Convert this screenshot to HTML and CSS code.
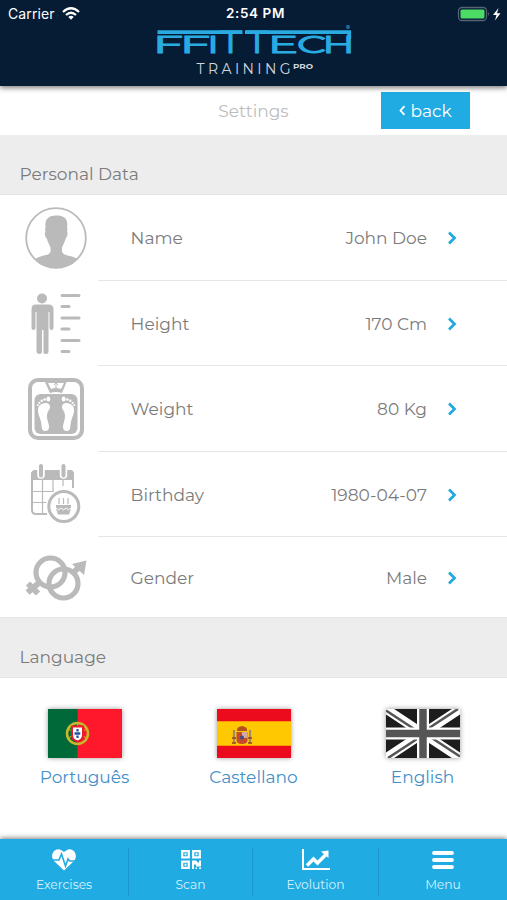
FILE: index.html
```html
<!DOCTYPE html>
<html lang="en">
<head>
<meta charset="utf-8">
<title>Settings</title>
<link rel="stylesheet" href="styles.css">
</head>
<body>
<div class="app">
  <header class="header">
    <div class="status">
      <div class="carrier"><span>Carrier</span>
        <svg width="18" height="13" viewBox="0 0 18 13" fill="none" stroke="#fff" stroke-width="2.300"><path d="M1 5Q9-2.400 17 5M4 8Q9 3.500 14 8"/><path d="M6.300 9.900Q9 7.800 11.700 9.900L9 12.700Z" fill="#fff" stroke="none"/></svg>
      </div>
      <span class="time">2:54 PM</span>
      <div class="battery">
        <svg width="46" height="16" viewBox="0 0 46 16"><rect x="1.500" y="1.500" width="28" height="13" rx="3.500" fill="none" stroke="#566373" stroke-width="1.300"/><rect x="3.500" y="3.500" width="24" height="9" rx="1.500" fill="#4cdb63"/><path d="M31 6q2 2 0 4z" fill="#566373"/><path d="M41.500 2L36 9h3.500L38 14.500 43.500 7.200H40z" fill="#fff"/></svg>
      </div>
    </div>
    <svg class="logo" width="200" height="52" viewBox="0 0 200 52">
      <path d="M3.500 5.200H88.500M91 5.200H197M195.200 4v8" stroke="#29abe2" stroke-width="3.800"/>
      <text class="brand" y="26"><tspan x="-1" textLength="30" lengthAdjust="spacingAndGlyphs">F</tspan><tspan x="26" textLength="30" lengthAdjust="spacingAndGlyphs">F</tspan><tspan x="53" textLength="12" lengthAdjust="spacingAndGlyphs">I</tspan><tspan class="tall" x="66" textLength="21" lengthAdjust="spacingAndGlyphs">T</tspan><tspan class="tall" x="92.500" textLength="21" lengthAdjust="spacingAndGlyphs">T</tspan><tspan x="114" textLength="30" lengthAdjust="spacingAndGlyphs">E</tspan><tspan x="143" textLength="29" lengthAdjust="spacingAndGlyphs">C</tspan><tspan x="168.500" textLength="32" lengthAdjust="spacingAndGlyphs">H</tspan></text>
      <text class="reg" x="192" y="3">®</text>
      <text class="sub" x="42.500" y="47" textLength="94">TRAINING</text>
      <text class="pro" x="139" y="41.500" textLength="20" lengthAdjust="spacingAndGlyphs">PRO</text>
    </svg>
  </header>
  <div class="titlebar">
    <h1>Settings</h1>
    <button class="back"><svg width="7" height="11" viewBox="0 0 7 11"><path d="M5.500 1.200L1.500 5.500l4 4.300" fill="none" stroke="#fff" stroke-width="1.800"/></svg><span>back</span></button>
  </div>
  <h2 class="section">Personal Data</h2>
  <main class="rows">
    <div class="row">
      <svg class="icon" viewBox="0 0 64 64"><circle cx="32" cy="32" r="29.800" fill="#fff" stroke="#bababa" stroke-width="1.800"/><path d="M21.500 21C20 10 29 9.500 33 9.500S45 11 43 21c.5 2 .5 3 0 5 1.500 1 0 5-1.500 7-1 4-3 6-3.500 9-1 6 3 7 8 8 4 1 6 2 7.500 3Q45 62 32 62T11.500 53c2-2 5-2.500 8-3.500 5-1 8-2 7-7.500-.5-3-2.500-5-3.500-9-2-2-3-6-1.500-7-.5-2-.5-3 0-5z" fill="#bababa"/></svg>
      <div class="cell"><span>Name</span><span class="value">John Doe</span><svg class="chev" viewBox="0 0 10 14"><path d="M2 1.500L7.500 7 2 12.500"/></svg></div>
    </div>
    <div class="row">
      <svg class="icon" viewBox="0 0 64 64" fill="#bababa"><g transform="translate(-.5 -1)"><circle cx="18.500" cy="7.500" r="5"/><path d="M12 13.500h13q5 0 5 5V37q0 2-2 2t-2-2V21h-1v40q0 2-2.600 2T20 61V39h-1.500v22q0 2-2.500 2t-3-2V21h-1v16q0 2-2 2t-2-2V18.500q0-5 4-5z"/><path d="M38.500 4.500h17M38.500 15.500h7M38.500 27h17M38.500 38h7M38.500 49.500h17M38.500 60.500h7" stroke="#bababa" stroke-width="3" stroke-linecap="round"/></g></svg>
      <div class="cell"><span>Height</span><span class="value">170 Cm</span><svg class="chev" viewBox="0 0 10 14"><path d="M2 1.500L7.500 7 2 12.500"/></svg></div>
    </div>
    <div class="row">
      <svg class="icon" viewBox="0 0 64 64"><rect x="6" y="3" width="52" height="58" rx="8" fill="#fff" stroke="#bababa" stroke-width="4"/><path d="M20.500 4H43l-5 12q-6-2-12 0z" fill="#bababa"/><path d="M24 6h16l-3 6q-5-2-10 0z" fill="#fff"/><path d="M32 11V7.500M30 8l2-2 2 2" fill="none" stroke="#bababa"/><rect x="10.500" y="17" width="43" height="40" rx="6" fill="#bababa"/><g id="foot" fill="#fff"><path d="M14 33c0-5 4-7 8-7 4 0 5 4 3 7-3 4-2 8-1 12 2 6 1 9-3 9-4 0-3-5-4-9-1-5-3-7-3-12z"/><ellipse cx="24.300" cy="22" rx="2" ry="2.500"/><circle cx="20.600" cy="22.500" r="1.300"/><circle cx="17.700" cy="23.800" r="1.200"/><circle cx="15.400" cy="25.800" r="1.100"/><circle cx="13.800" cy="28" r="1"/></g><use href="#foot" transform="matrix(-1 0 0 1 64 0)"/></svg>
      <div class="cell"><span>Weight</span><span class="value">80 Kg</span><svg class="chev" viewBox="0 0 10 14"><path d="M2 1.500L7.500 7 2 12.500"/></svg></div>
    </div>
    <div class="row">
      <svg class="icon" viewBox="0 0 64 64"><g transform="translate(0 -1)"><path d="M49 26V12q0-3-3-3H12q-4 0-4 4v35q0 4 4 4h11" fill="#fff" stroke="#bababa" stroke-width="2"/><path d="M7 18v-5q0-5 5-5H45q5 0 5 5v5z" fill="#bababa"/><path d="M9 29.500h27M9 40.500h17M18.500 18v34M29 18v12M39 18v6" stroke="#bababa" stroke-width="1.200"/><path d="M17 5v8M39.500 5v8" stroke="#fff" stroke-width="7.500" stroke-linecap="round"/><path d="M17 4v9.500M39.500 4v9.500" stroke="#bababa" stroke-width="4" stroke-linecap="round"/><circle cx="39.800" cy="44.500" r="18" fill="#fff"/><circle cx="39.800" cy="44.500" r="15" fill="none" stroke="#bababa" stroke-width="3"/><path d="M32 43h15v4l-2 5.500H34L32 47z" fill="#bababa"/><path d="M35 36v6M39.500 36v6M44 36v6" stroke="#bababa" stroke-width="1.200"/><path d="M32 46l2.500 2 2.500-2 2.500 2 2.500-2 2.500 2 2.500-2" stroke="#fff" fill="none"/></g></svg>
      <div class="cell"><span>Birthday</span><span class="value">1980-04-07</span><svg class="chev" viewBox="0 0 10 14"><path d="M2 1.500L7.500 7 2 12.500"/></svg></div>
    </div>
    <div class="row last">
      <svg class="icon" viewBox="0 0 64 64" fill="none" stroke="#bababa" stroke-width="5.200"><g transform="translate(0 1)"><circle cx="26.500" cy="23.500" r="14.500"/><circle cx="39.500" cy="34.500" r="14.500"/><path d="M16 33L3.500 43.500M4 34.500l10 10M49 24l6-6" stroke-width="6"/><path d="M48 15L62.500 11.500 60 26z" fill="#bababa" stroke="none"/></g></svg>
      <div class="cell"><span>Gender</span><span class="value">Male</span><svg class="chev" viewBox="0 0 10 14"><path d="M2 1.500L7.500 7 2 12.500"/></svg></div>
    </div>
  </main>
  <h2 class="section language">Language</h2>
  <div class="langs">
    <a class="lang">
      <svg class="flag" viewBox="0 0 74 49"><path fill="#ff172c" d="M0 0h74v49H0z"/><path fill="#00693a" d="M0 0h29.500v49H0z"/><circle cx="29.500" cy="24.500" r="10.500" fill="none" stroke="#c9b82b" stroke-width="2.500"/><path d="M20 20l19 9M20 29l19-9M29.500 14v21" stroke="#d9b51b"/><path d="M24 17.500h11V26q0 5-5.500 6.500Q24 31 24 26z" fill="#fff" stroke="#e91c2e" stroke-width="2"/><path d="M29.500 20v9M26.500 24.500h6" stroke="#24539b" stroke-width="2.300" stroke-dasharray="2.500 .8"/></svg>
      <span>Português</span>
    </a>
    <a class="lang">
      <svg class="flag" viewBox="0 0 74 49"><path fill="#ec0a1d" d="M0 0h74v49H0z"/><path fill="#ffc800" d="M0 12.300h74v24.500H0z"/><path d="M17 21v13M33 21v13" stroke="#a58b65" stroke-width="2.200"/><path d="M15 29h4M31 29h4M15 34h4M31 34h4" stroke="#9d3b2e" stroke-width="1.500"/><path d="M19.500 23h11v8q0 4-5.500 4t-5.500-4z" fill="#c44a2c"/><path d="M25 23h5.500v6H25z" fill="#d9a5a0"/><circle cx="25" cy="28.500" r="2" fill="#3b4d87"/><path d="M20 22q-1-4 5-5 6 1 5 5z" fill="#b4521d"/></svg>
      <span>Castellano</span>
    </a>
    <a class="lang">
      <svg class="flag" viewBox="0 0 74 49"><path fill="#1d1d1d" d="M0 0h74v49H0z"/><path d="M0 0l74 49M74 0L0 49" stroke="#fff" stroke-width="9"/><path d="M0 1.500l35 23M39 24.500L74 47.500M72 0L37 23M2 49l35-23" stroke="#555" stroke-width="2.600"/><path d="M37 0v49M0 24.500h74" stroke="#fff" stroke-width="12"/><path d="M37 0v49M0 24.500h74" stroke="#555" stroke-width="7.500"/></svg>
      <span>English</span>
    </a>
  </div>
  <nav class="tabs">
    <a class="tab"><svg width="26" height="24" viewBox="0 0 26 24"><path d="M13 22.500L3 13C-2 7 4-1 10 2l3 2 3-2c6-3 12 5 7 11z" fill="#fff"/><path d="M1 12h7l2.500-6 4 12 2.500-7 1.500 2H25" fill="none" stroke="#20abe3" stroke-width="1.600"/></svg><span>Exercises</span></a>
    <a class="tab"><svg width="26" height="24" viewBox="0 0 26 24"><path d="M4.200 3.200h6.600v6.100H4.200zM15.200 3.200h6.600v6.100h-6.600zM4.200 13.700h6.600v6.100H4.200z" fill="none" stroke="#fff" stroke-width="2.200"/><path d="M6.500 5.300h2v2h-2zM17.500 5.300h2v2h-2zM6.500 15.700h2v2h-2zM14 12.600h4l2 2h1v-2h2v6h-5v-2h-2v4.300h-2zM17.500 19.500h1.500V21h-1.500zM21 19.500h2V21h-2z" fill="#fff"/></svg><span>Scan</span></a>
    <a class="tab"><svg width="30" height="24" viewBox="0 0 30 24"><path d="M2 1v20h27" fill="none" stroke="#fff" stroke-width="2"/><path d="M6 17.500l6.500-6.500 4 4 8-8" fill="none" stroke="#fff" stroke-width="3.500"/><path d="M20 3.500l7.500-1V10z" fill="#fff"/></svg><span>Evolution</span></a>
    <a class="tab"><svg width="26" height="24" viewBox="0 0 26 24"><path d="M4 5h18M4 12h18M4 19h18" stroke="#fff" stroke-width="3.800" stroke-linecap="round"/></svg><span>Menu</span></a>
  </nav>
</div>
</body>
</html>
```
FILE: styles.css
```css
* { box-sizing: border-box; }
body { margin: 0; background: #fff; font-family: Montserrat, Inter, sans-serif; font-size: 17px; color: #7b7b7b; }
h1, h2 { margin: 0; font-weight: 400; font-size: 17px; }
.app { width: 507px; height: 900px; display: flex; flex-direction: column; overflow: hidden; }
.header { height: 86px; flex: none; background: #051c34; box-shadow: 0 2px 5px rgba(0,0,0,.5); z-index: 1; color: #fff; display: flex; flex-direction: column; align-items: center; }
.status { width: 507px; height: 27px; flex: none; display: grid; grid-template-columns: 1fr auto 1fr; align-items: center; padding: 0 4px 0 8px; font: 400 14px/27px Inter, sans-serif; }
.carrier { display: flex; align-items: center; gap: 7px; letter-spacing: .1px; }
.time { font-weight: 600; font-size: 13.500px; letter-spacing: .6px; }
.battery { display: flex; justify-content: flex-end; }
.logo { overflow: visible; }
.brand { font-weight: 400; font-size: 23.500px; fill: #29abe2; stroke: #29abe2; stroke-width: 1; }
.tall { font-size: 31px; }
.reg { font: 6px Inter, sans-serif; fill: #29abe2; }
.sub { font-size: 14px; fill: #d0d6df; }
.pro { font-weight: 700; font-size: 7.500px; fill: #d0d6df; }
.titlebar { height: 49px; flex: none; display: grid; grid-template-columns: 1fr auto 1fr; align-items: center; }
.titlebar h1 { grid-column: 2; color: #bdbdbd; }
.back { justify-self: end; margin-right: 37px; width: 89px; height: 37px; border: 0; padding: 0; background: #20abe3; color: #fff; font: 400 17px Montserrat, Inter, sans-serif; display: flex; align-items: center; justify-content: center; gap: 4px; }
.section { height: 60px; flex: none; background: #ededed; border-bottom: 1px solid #e5e5e5; padding: 19px 0 0 19.500px; line-height: 41px; }
.language { height: 61px; border-top: 1px solid #e5e5e5; }
.rows { flex: none; }
.row { height: 85.500px; display: flex; }
.row.last { height: 80px; }
.icon { width: 64px; height: 64px; flex: none; margin: 11px 10px 0 24px; }
.cell { flex: 1; display: flex; align-items: center; border-bottom: 1.500px solid #e6e6e6; padding: 2px 50px 0 32.600px; }
.last .cell { border-bottom: 0; }
.value { margin-left: auto; }
.chev { width: 10px; height: 14px; margin-left: 20px; fill: none; stroke: #20a8df; stroke-width: 2.700; }
.langs { flex: 1; display: grid; grid-template-columns: repeat(3, 1fr); padding-top: 31px; }
.lang { display: flex; flex-direction: column; align-items: center; color: #438fca; gap: 8px; line-height: 22px; }
.flag { width: 74px; height: 49px; box-shadow: 0 0 5px rgba(0,0,0,.4); }
.tabs { height: 61px; flex: none; background: #20abe3; display: grid; grid-template-columns: 129px 124px 126px 128px; box-shadow: 0 -1px 5px rgba(0,0,0,.5); color: #d5f2ff; font-size: 12.300px; padding: 9px 0 4px; }
.tab { display: flex; flex-direction: column; align-items: center; gap: 4px; line-height: 17px; border-right: 1px solid #1c94cc; }
.tab:last-child { border-right: 0; }
```
